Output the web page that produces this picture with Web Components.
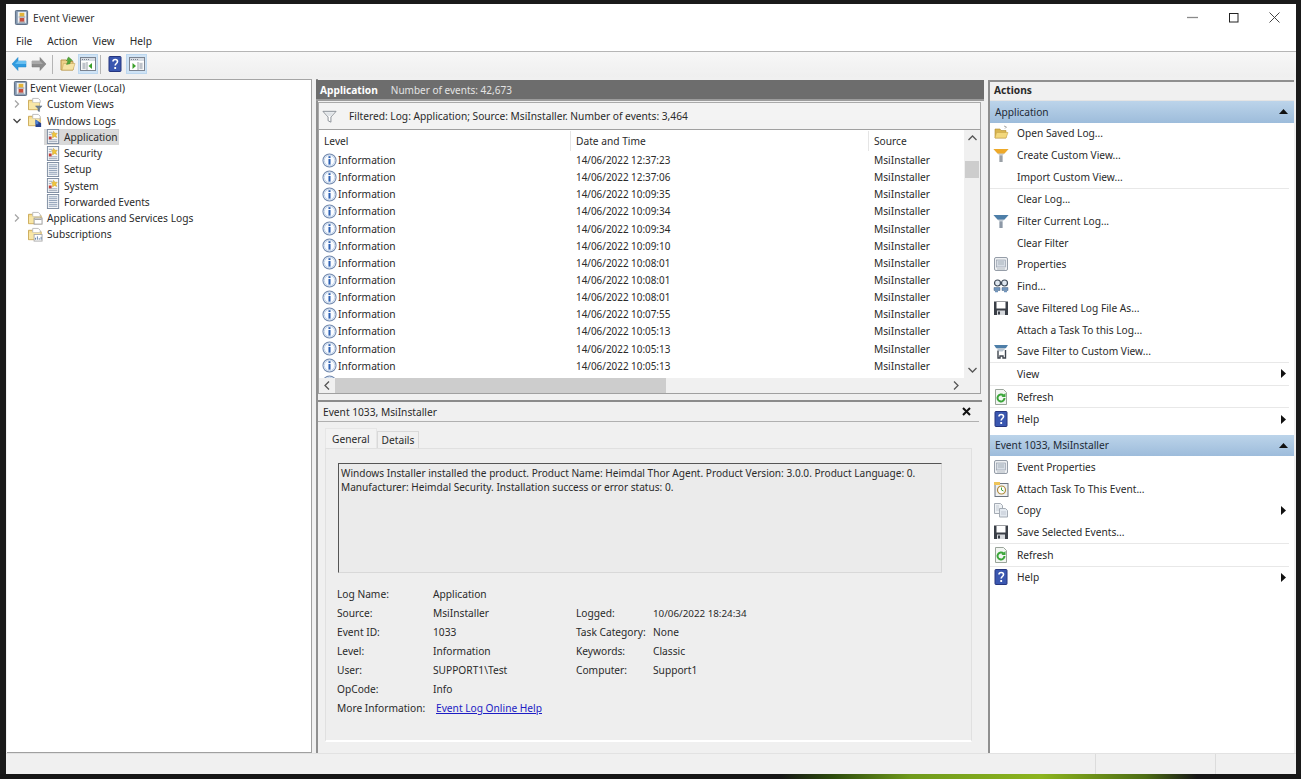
<!DOCTYPE html>
<html><head><meta charset="utf-8"><title>Event Viewer</title>
<style>
html,body{margin:0;height:100%}
body{box-sizing:border-box;height:779px;overflow:hidden;padding:4px 5px 5px 6px;
background:linear-gradient(#1a1a1a,#1a1a1a) top/100% 774px no-repeat,linear-gradient(90deg,#161616 0,#161616 60%,#2c4a0c 64%,#6f9a1c 70%,#8cb41e 80%,#4d6d14 88%,#161616 92%);
font:10.2px "Noto Sans","Open Sans",sans-serif;color:#2a2a2a}
</style></head><body>
<ev-window></ev-window>
<script>
const ICONS={
app:`<rect x="1.500" y=".5" width="13" height="15" rx="1" fill="#8397b0" stroke="#56677e"/><rect x="4" y="2" width="9" height="12" fill="#eef1f4"/><rect x="6" y="3" width="5" height="4" fill="#e3b53a"/><rect x="6" y="8.500" width="5" height="4" fill="#c9503f"/><path d="M5 7.500h7M5 13h7" stroke="#8a8f98"/>`,
folderFilter:`<path d="M.5 3.500V13.500H12V5H6L5 3.500z" fill="#f6dd8e" stroke="#c9a654"/><path d="M5 1.500h6l2 2V6H5z" fill="#fff" stroke="#bbb"/><path d="M1 6h11v7H1z" fill="#f8e6a6"/><path d="M8 9.500h7l-2.700 3v3l-1.600-.5v-2.500z" fill="#6e8093" stroke="#56677e" stroke-width=".5"/>`,
folderLogs:`<path d="M.5 3.500V13.500H13V5H6L5 3.500z" fill="#f6dd8e" stroke="#c9a654"/><path d="M5 1.500h6l2 2V6H5z" fill="#fff" stroke="#bbb"/><path d="M1 6h11v7H1z" fill="#f8e6a6"/><path d="M8 7l6 4v4H8z" fill="#26428f"/><path d="M8 7l3 2v3H8z" fill="#4d7fd0"/>`,
folderApps:`<path d="M.5 3.500V13.500H14V5H6L5 3.500z" fill="#f6dd8e" stroke="#c9a654"/><path d="M5 1.500h6l2 2V6H5z" fill="#fff" stroke="#bbb"/><path d="M1 6h12v7H1z" fill="#f8e6a6"/><rect x="6.500" y="7.500" width="8.500" height="6.500" fill="#fff" stroke="#9a9a9a"/><path d="M7 9h7.500" stroke="#9a9a9a"/>`,
folderSubs:`<path d="M.5 3.500V13.500H14V5H6L5 3.500z" fill="#f6dd8e" stroke="#c9a654"/><path d="M5 1.500h6l2 2V6H5z" fill="#fff" stroke="#bbb"/><path d="M1 6h12v7H1z" fill="#f8e6a6"/><rect x="6.500" y="8" width="8.500" height="7" fill="#fff" stroke="#aaa"/><path d="M8 13.500v-2M10 13.500v-3.500M12 13.500v-1.500M14 13.500v-3" stroke="#5f7fa8"/>`,
log:`<rect x="1.500" y=".5" width="12" height="15" fill="#f4f6f8" stroke="#7c8ba0"/><path d="M3 3.500h4M3 6h3M3 11.500h9M3 13.500h9" stroke="#9aa5b4"/><path d="M8 2.500l1.500 2h2.500l-1.500 2 1 2.500-2.500-1-2 1.500V6L6 4.500h2z" fill="#f0c63c" stroke="#c99c25" stroke-width=".5"/><rect x="3" y="8" width="3" height="3" fill="#c23c36"/>`,
logPlain:`<rect x="1.500" y=".5" width="12" height="15" fill="#f4f6f8" stroke="#7c8ba0"/><path d="M3 3h9M3 5h9M3 7h9M3 9h9M3 11h9M3 13h9" stroke="#8a9cb3"/>`,
back:`<path d="M1 8l6-6.500V5h8v6H7v3.500z" fill="#2f9be0" stroke="#2384c6" stroke-width=".5"/><path d="M7 5h8v3H4z" fill="#68bff0"/>`,
forward:`<path d="M15 8L9 1.500V5H1v6h8v3.500z" fill="#8c8c8c" stroke="#777" stroke-width=".5"/><path d="M9 5H1v3h11z" fill="#a8a8a8"/>`,
openFolder:`<path d="M1 4h5l1.500 1.500H13V14H1z" fill="#ecd089" stroke="#b9964c"/><path d="M2 14l1.500-6.500H15L13 14z" fill="#f6e3a4" stroke="#c8a85c" stroke-width=".6"/><path d="M8.500 1l4 3.500-2 .2-.5 3-3.500.7 1.700-3.700-1.700-.2z" fill="#55a93b" stroke="#3c8427" stroke-width=".5"/>`,
paneL:`<rect x=".5" y="1.500" width="15" height="13" fill="#fff" stroke="#7b8390"/><path d="M1 2h14v3H1z" fill="#d7dce3"/><path d="M2 3.500h1M4 3.500h1M6 3.500h1M8 3.500h1" stroke="#7b8390"/><path d="M1.500 6h5v8h-5z" fill="#f2f2f2"/><path d="M7 6v8" stroke="#9a9fa8"/><path d="M2.500 8h3M2.500 10h3M2.500 12h3" stroke="#8a94a3"/><path d="M12 7v6l-3.500-3z" fill="#3aa02a"/>`,
paneR:`<rect x=".5" y="1.500" width="15" height="13" fill="#fff" stroke="#7b8390"/><path d="M1 2h14v3H1z" fill="#d7dce3"/><path d="M2 3.500h1M4 3.500h1M6 3.500h1M8 3.500h1" stroke="#7b8390"/><path d="M9.500 6h5v8h-5z" fill="#f2f2f2"/><path d="M9 6v8" stroke="#9a9fa8"/><path d="M10.500 8h3M10.500 10h3M10.500 12h3" stroke="#8a94a3"/><path d="M3.500 7v6l3.500-3z" fill="#3aa02a"/>`,
help:`<rect x="2" y=".5" width="12" height="15" rx=".8" fill="#3a57b0" stroke="#26367f"/><path d="M6 5.500c0-2.600 4.500-2.600 4.500 0 0 2-2.300 2-2.300 4" fill="none" stroke="#fff" stroke-width="1.600"/><rect x="7.300" y="11" width="1.800" height="2" fill="#fff"/>`,
info:`<circle cx="8" cy="8" r="7" fill="#eaf2fb" stroke="#6f86ac" stroke-width="1.100"/><circle cx="8" cy="8" r="5.500" fill="#fafcff" stroke="#c3d4ea"/><rect x="6.900" y="3.400" width="2.200" height="2" fill="#2f62b4"/><rect x="6.900" y="6.400" width="2.200" height="6" fill="#2f62b4"/>`,
funnel:`<path d="M1 2.500h14L9.500 8.500V14l-3-1.500v-4z" fill="#fff" stroke="#858b92"/><path d="M3 3.500h10L9 7.500H7z" fill="#dfe3e7"/>`,
openLog:`<path d="M2 4h5l1 1.500h5V13H2z" fill="#d9b64f" stroke="#b0892f" stroke-width=".6"/><path d="M2 13l1.500-5.500H15L13 13z" fill="#f3d87c" stroke="#c9a64a" stroke-width=".6"/><path d="M11 1l2.500 1L12 3.500" fill="none" stroke="#a9a9a9"/>`,
funnelGold:`<path d="M.5 2h15L9.500 8.500V15h-3V8.500z" fill="#c9ccd0"/><path d="M.5 2h15l-4 4.500h-7z" fill="#eea929"/><path d="M6.500 8.500h3V15h-3z" fill="#9aa0a6"/>`,
funnelBlue:`<path d="M.5 2h15L9.500 8.500V15h-3V8.500z" fill="#c3cbd4"/><path d="M.5 2h15l-4 4.500h-7z" fill="#4d7ea8"/><path d="M6.500 8.500h3V15h-3z" fill="#8d98a6"/>`,
props:`<rect x="1.500" y="1.500" width="13" height="13" rx="1.500" fill="#eef0f3" stroke="#959da8"/><rect x="3.500" y="4" width="9" height="7" fill="#d7dde5" stroke="#8d97a4" stroke-width=".6"/><path d="M5 6h6M5 8h6M4 13h8" stroke="#9aa3ae" stroke-width=".7"/>`,
find:`<circle cx="4.500" cy="5" r="3" fill="#dfe7f0" stroke="#3f4a58" stroke-width="1.200"/><circle cx="11.500" cy="5" r="3" fill="#dfe7f0" stroke="#3f4a58" stroke-width="1.200"/><path d="M7 4h2v2.500H7z" fill="#3f4a58"/><path d="M1 9.500h6v3H1zM9 9.500h6v3H9z" fill="#6f94bd" stroke="#4d6784" stroke-width=".5"/><path d="M2 13.500h3M11 13.500h3" stroke="#6f94bd" stroke-width="1.400"/>`,
save:`<path d="M1 1.500h14V15H1z" fill="#3a3f47"/><rect x="3.500" y="2" width="9" height="6.500" fill="#fff"/><rect x="4" y="10.500" width="8" height="4.500" fill="#d5d8dc"/><rect x="5" y="11.500" width="2" height="3" fill="#3a3f47"/>`,
saveFilter:`<path d="M1 2h14l-2 3H3z" fill="#4d7ea8"/><path d="M3 5h10L9.500 8.500H6.500z" fill="#b9c6d2"/><path d="M5 7.500V15h2v-2h3v2h2.500V7" fill="none" stroke="#3f464f" stroke-width="1.400"/>`,
refresh:`<path d="M2.500.5h8l3 3v12h-11z" fill="#f3f6f3" stroke="#9aa59a"/><path d="M11.500 9a3.500 3.500 0 1 1-1-2.500" fill="none" stroke="#3ba63a" stroke-width="2"/><path d="M12.500 4v4h-4z" fill="#3ba63a"/>`,
task:`<rect x="2" y="2.500" width="13" height="13" fill="#eef0f2" stroke="#6f7680"/><path d="M1 1h6v3H1z" fill="#eec45a"/><circle cx="8.500" cy="9" r="4" fill="#fff" stroke="#b08a3c" stroke-width="1.200"/><path d="M8.500 6.500V9l2 1" fill="none" stroke="#3ba63a" stroke-width="1"/>`,
copy:`<path d="M1.500 1.500h6l2 2v8h-8z" fill="#eef1f4" stroke="#a4abb4"/><path d="M6.500 6.500h6l2 2v6.500h-8z" fill="#e3e9f0" stroke="#a4abb4"/><path d="M3 4h3M3 6h3M3 8h3M8 10h5M8 12h5" stroke="#b1bac5" stroke-width=".7"/>`
};
function icon(n,s=16){return `<svg width="${s}" height="${s}" viewBox="0 0 16 16" style="display:block;flex:none">${ICONS[n]||''}</svg>`}
class Base extends HTMLElement{
  constructor(){super();this.attachShadow({mode:'open'})}
}
class EvTreeItem extends Base{
  connectedCallback(){
    const lvl=+this.getAttribute('level')||0,exp=this.getAttribute('expander'),sel=this.hasAttribute('selected');
    const pad=[4,5,37][lvl];
    const chev=exp==='open'?`<path d="M1.500 3l3.500 3.500L8.500 3" fill="none" stroke="#444" stroke-width="1.300"/>`:exp==='closed'?`<path d="M3 1.500L6.500 5 3 8.500" fill="none" stroke="#a6a6a6" stroke-width="1.300"/>`:'';
    this.shadowRoot.innerHTML=`<style>
    :host{display:block}
    .r{display:flex;align-items:center;height:16.250px;padding-left:${pad}px;white-space:nowrap}
    .c{width:10px;height:10px;flex:none;margin-right:${lvl===1?4:0}px;display:${lvl===1?'block':'none'}}
    .g{display:inline-flex;align-items:center;gap:2px;height:16.250px;padding:0 1px 0 2px;${sel?'background:#d9d9d9;':''}}
    .g .l{margin-left:${[0,2,1][lvl]}px}
    </style><div class="r"><svg class="c" viewBox="0 0 10 10">${chev}</svg><span class="g">${icon(this.getAttribute('icon'),15)}<span class="l"><slot></slot></span></span></div>`;
  }
}
class EvTree extends Base{
  connectedCallback(){this.shadowRoot.innerHTML=`<style>:host{display:block;background:#fff;border-top:1px solid #a5a5a5;border-right:1px solid #a0a0a0;border-bottom:1px solid #a0a0a0;margin:0 1px 0 1px;overflow:hidden}</style>
    <ev-tree-item icon="app">Event Viewer (Local)</ev-tree-item>
    <ev-tree-item level="1" expander="closed" icon="folderFilter">Custom Views</ev-tree-item>
    <ev-tree-item level="1" expander="open" icon="folderLogs">Windows Logs</ev-tree-item>
    <ev-tree-item level="2" icon="log" selected>Application</ev-tree-item>
    <ev-tree-item level="2" icon="log">Security</ev-tree-item>
    <ev-tree-item level="2" icon="logPlain">Setup</ev-tree-item>
    <ev-tree-item level="2" icon="log">System</ev-tree-item>
    <ev-tree-item level="2" icon="logPlain">Forwarded Events</ev-tree-item>
    <ev-tree-item level="1" expander="closed" icon="folderApps">Applications and Services Logs</ev-tree-item>
    <ev-tree-item level="1" icon="folderSubs">Subscriptions</ev-tree-item>`}
}
class EvTitlebar extends Base{
  connectedCallback(){this.shadowRoot.innerHTML=`<style>
    :host{display:flex;align-items:center;height:27px;background:#fff;padding-left:8px;flex:none}
    .t{margin-left:4px;color:#333;flex:1}
    .b{width:41px;height:27px;display:flex;align-items:center;justify-content:center}
    svg{display:block}
    </style>${icon('app',15)}<span class="t">Event Viewer</span>
    <span class="b"><svg width="11" height="11" viewBox="0 0 11 11"><path d="M0 5.500h11" stroke="#8a8a8a" stroke-width="1.300"/></svg></span>
    <span class="b"><svg width="10" height="10" viewBox="0 0 10 10"><rect x=".5" y=".5" width="8.500" height="8.500" fill="none" stroke="#222"/></svg></span>
    <span class="b" style="margin-right:1px"><svg width="11" height="11" viewBox="0 0 11 11"><path d="M.5.5l10 10M10.500.5l-10 10" stroke="#444" stroke-width="1"/></svg></span>`}
}
class EvMenubar extends Base{
  connectedCallback(){this.shadowRoot.innerHTML=`<style>
    :host{display:flex;height:20px;align-items:center;background:#fff;border-bottom:1px solid #b5b5b5;flex:none;padding-left:10px;box-sizing:content-box}
    span{margin-right:15px}
    </style><span>File</span><span>Action</span><span>View</span><span>Help</span>`}
}
class EvToolbar extends Base{
  connectedCallback(){this.shadowRoot.innerHTML=`<style>
    :host{display:flex;align-items:center;height:25px;padding:0 0 1px 3px;background:linear-gradient(#f7f7f7,#efefef);flex:none;box-sizing:border-box;margin-bottom:2px}
    .i{width:20px;height:20px;display:flex;align-items:center;justify-content:center}
    .on{background:#cfe3f5;outline:1px solid #bcd7ef;outline-offset:-1px}
    .s{width:1px;height:19px;background:#b4b4b4}
    </style>
    <span class="i">${icon('back')}</span><span class="i">${icon('forward')}</span><span class="s" style="margin:0 5px 0 3px"></span>
    <span class="i">${icon('openFolder')}</span><span class="i on">${icon('paneL')}</span><span class="s" style="margin:0 4px 0 2px"></span>
    <span class="i" style="margin-right:1px">${icon('help')}</span><span class="i on" style="width:21px">${icon('paneR')}</span>`}
}
class EvEventTable extends Base{
  connectedCallback(){
    const times=['12:37:23','12:37:06','10:09:35','10:09:34','10:09:34','10:09:10','10:08:01','10:08:01','10:08:01','10:07:55','10:05:13','10:05:13','10:05:13',''];
    const rows=times.map(t=>`<div class="row">${t?`<span class="lv">${icon('info',15)}<span>Information</span></span><span class="d">14/06/2022 ${t}</span><span>MsiInstaller</span>`:`<span class="lv">${icon('info',15)}</span>`}</div>`).join('');
    this.shadowRoot.innerHTML=`<style>
    :host{display:grid;grid-template-columns:1fr 16px;grid-template-rows:1fr 15px;border:1px solid #a0a0a0;background:#fff;min-height:0;flex:1;margin:0 3px 0 0}
    .main{display:flex;flex-direction:column;min-height:0;overflow:hidden}
    .h{height:21.500px;flex:none;display:grid;grid-template-columns:252px 298px 1fr;align-items:stretch}
    .h span{display:flex;align-items:center;padding-left:5px;border-right:1px solid #e5e5e5;margin:1px 0}
    .h span:last-child{border:0}
    .body{flex:1;overflow:hidden;min-height:0}
    .row{height:17.150px;display:grid;grid-template-columns:252px 298px 1fr;align-items:center;white-space:nowrap}
    .row>span{padding-left:5px}
    .row>.d{font-size:9.900px}
    .row>.lv{display:flex;align-items:center;padding-left:3px;gap:1px}
    .v{background:#f0f0f0;display:flex;flex-direction:column;align-items:center}
    .ar{height:16px;width:16px;display:flex;align-items:center;justify-content:center;flex:none}
    .thumb{width:14px;height:17px;background:#cdcdcd;margin-top:15px}
    .sp{flex:1}
    .hs{background:#f0f0f0;display:flex;align-items:center;grid-column:1/3}
    .hthumb{height:15px;background:#cdcdcd;width:331px;flex:none}
    </style>
    <div class="main"><div class="h"><span>Level</span><span>Date and Time</span><span>Source</span></div><div class="body">${rows}</div></div>
    <div class="v"><span class="ar"><svg width="9" height="6" viewBox="0 0 9 6"><path d="M.5 5l4-4 4 4" fill="none" stroke="#555" stroke-width="1.300"/></svg></span><span class="thumb"></span><span class="sp"></span><span class="ar"><svg width="9" height="6" viewBox="0 0 9 6"><path d="M.5 1l4 4 4-4" fill="none" stroke="#555" stroke-width="1.300"/></svg></span></div>
    <div class="hs"><span class="ar"><svg width="6" height="9" viewBox="0 0 6 9"><path d="M5 .5l-4 4 4 4" fill="none" stroke="#555" stroke-width="1.300"/></svg></span><span class="hthumb"></span><span class="sp"></span><span class="ar" style="margin-right:16px"><svg width="6" height="9" viewBox="0 0 6 9"><path d="M1 .5l4 4-4 4" fill="none" stroke="#555" stroke-width="1.300"/></svg></span></div>`}
}
class EvLogPanel extends Base{
  connectedCallback(){this.shadowRoot.innerHTML=`<style>
    :host{display:flex;flex-direction:column;height:293px;flex:none;box-sizing:border-box;padding-top:1px;margin-right:1px}
    .f{height:27px;box-sizing:border-box;display:flex;align-items:center;flex:none;border:1px solid #a9a9a9;border-bottom:0;margin:0 3px 0 0;padding-left:3px;background:#f3f3f3}
    .f span{margin-left:12px}
    </style><div class="f">${icon('funnel',15)}<span>Filtered: Log: Application; Source: MsiInstaller. Number of events: 3,464</span></div><ev-event-table></ev-event-table>`}
}
class EvField extends Base{
  connectedCallback(){this.shadowRoot.innerHTML=`<style>:host{display:flex;align-items:center;height:19px;white-space:nowrap}</style><slot></slot>`}
}
class EvDetail extends Base{
  connectedCallback(){this.shadowRoot.innerHTML=`<style>
    :host{display:flex;flex-direction:column;flex:1;min-height:0;margin-top:6px;border-top:2px solid #8b8b8b;margin-right:3px}
    .h{height:20px;box-sizing:border-box;flex:none;display:flex;align-items:center;justify-content:space-between;padding:0 8px 0 5px;border-bottom:1px solid #b0b0b0;margin-right:3px}
    .tabs{display:flex;align-items:flex-end;margin:6px 0 0 7px;height:20px;flex:none}
    .tab{padding:0 4px;height:17px;box-sizing:border-box;display:flex;align-items:center;background:#f0f0f0;border:1px solid #d9d9d9;border-bottom:0}
    .tab.a{height:20px;background:#f2f2f2;border-color:#e6e6e6;padding:0 6px}
    .p{margin:0 10px 0 7px;height:294px;box-sizing:border-box;background:#eeeeee;border:1px solid #e0e0e0;border-bottom:2px solid #fff;padding:14px 0 0 12px;flex:none}
    .box{width:604px;height:110px;box-sizing:border-box;border:1px solid #d8d8d8;border-top:1px solid #555;border-left:1px solid #555;background:#ebebeb;padding:2px 0 0 2px;line-height:14px;margin-bottom:11.500px;font-size:10.100px}
    .g{display:grid;grid-template-columns:96px 143px 77px 1fr;margin-left:-1px}
    .d{font-size:9.800px}
    a{color:#1c1cc4;text-decoration:underline;margin-left:3px}
    </style>
    <div class="h"><span>Event 1033, MsiInstaller</span><svg width="9" height="9" viewBox="0 0 9 9"><path d="M1 1l7 7M8 1L1 8" stroke="#111" stroke-width="2"/></svg></div>
    <div class="tabs"><span class="tab a">General</span><span class="tab">Details</span></div>
    <div class="p"><div class="box">Windows Installer installed the product. Product Name: Heimdal Thor Agent. Product Version: 3.0.0. Product Language: 0.<br>Manufacturer: Heimdal Security. Installation success or error status: 0.</div>
    <div class="g">
    <ev-field>Log Name:</ev-field><ev-field>Application</ev-field><ev-field></ev-field><ev-field></ev-field>
    <ev-field>Source:</ev-field><ev-field>MsiInstaller</ev-field><ev-field>Logged:</ev-field><ev-field class="d">10/06/2022 18:24:34</ev-field>
    <ev-field>Event ID:</ev-field><ev-field>1033</ev-field><ev-field>Task Category:</ev-field><ev-field>None</ev-field>
    <ev-field>Level:</ev-field><ev-field>Information</ev-field><ev-field>Keywords:</ev-field><ev-field>Classic</ev-field>
    <ev-field>User:</ev-field><ev-field>SUPPORT1\\Test</ev-field><ev-field>Computer:</ev-field><ev-field>Support1</ev-field>
    <ev-field>OpCode:</ev-field><ev-field>Info</ev-field><ev-field></ev-field><ev-field></ev-field>
    <ev-field>More Information:</ev-field><ev-field><a href="#">Event Log Online Help</a></ev-field><ev-field></ev-field><ev-field></ev-field>
    </div></div>`}
}
class EvCenter extends Base{
  connectedCallback(){this.shadowRoot.innerHTML=`<style>
    :host{display:flex;flex-direction:column;min-height:0;background:#f0f0f0;border-left:2px solid #8f8f8f}
    .b{height:19px;flex:none;background:#6d6d6d;color:#e4e4e4;display:flex;align-items:center;border-bottom:2px solid #9c9c9c;margin:1px 1px 0 -2px;white-space:pre;padding-left:4px}
    b{color:#fff;font-weight:700;margin-right:13px}
    span{font-size:10px}
    </style><div class="b"><b>Application</b><span>Number of events: 42,673</span></div><ev-log-panel></ev-log-panel><ev-detail></ev-detail>`}
}
class EvAction extends Base{
  connectedCallback(){
    const ic=this.getAttribute('icon'),sep=this.hasAttribute('sep'),sub=this.hasAttribute('sub');
    this.shadowRoot.innerHTML=`<style>
    :host{display:flex;align-items:center;height:21.700px;white-space:nowrap;padding:0 3px 0 3px;margin-right:5px;${sep?'border-bottom:1px solid #e8e8e8;':''}}
    .i{width:16px;height:16px;flex:none;margin-right:8px}
    .t{flex:1}
    </style><span class="i">${ic?icon(ic):''}</span><span class="t"><slot></slot></span>${sub?`<svg width="5" height="9" viewBox="0 0 5 9"><path d="M0 0l5 4.500-5 4.500z" fill="#111"/></svg>`:''}`}
}
class EvSection extends Base{
  connectedCallback(){this.shadowRoot.innerHTML=`<style>
    :host{display:block}
    .h{height:21.500px;display:flex;align-items:center;justify-content:space-between;padding:0 6px 0 5px;background:linear-gradient(#bcd4ea,#9dbcdb);color:#1f2a36}
    </style><div class="h"><span>${this.getAttribute('title')}</span><svg width="9" height="5" viewBox="0 0 9 5"><path d="M0 5l4.500-5L9 5z" fill="#111"/></svg></div><slot></slot>`}
}
class EvActions extends Base{
  connectedCallback(){this.shadowRoot.innerHTML=`<style>
    :host{display:block;background:#fff;border-left:2px solid #8f8f8f;border-top:2px solid #8f8f8f;margin-top:1px;overflow:hidden}
    .t{height:19px;box-sizing:border-box;display:flex;align-items:center;padding:0 0 2px 4px;font-weight:700;background:#f0f0f0;border-bottom:1px solid #e4e4e4}
    .gap{height:4.500px}
    </style><div class="t">Actions</div>
    <ev-section title="Application">
    <ev-action icon="openLog">Open Saved Log...</ev-action>
    <ev-action icon="funnelGold">Create Custom View...</ev-action>
    <ev-action sep>Import Custom View...</ev-action>
    <ev-action>Clear Log...</ev-action>
    <ev-action icon="funnelBlue">Filter Current Log...</ev-action>
    <ev-action>Clear Filter</ev-action>
    <ev-action icon="props">Properties</ev-action>
    <ev-action icon="find">Find...</ev-action>
    <ev-action icon="save">Save Filtered Log File As...</ev-action>
    <ev-action>Attach a Task To this Log...</ev-action>
    <ev-action icon="saveFilter" sep>Save Filter to Custom View...</ev-action>
    <ev-action sub sep>View</ev-action>
    <ev-action icon="refresh" sep>Refresh</ev-action>
    <ev-action icon="help" sub>Help</ev-action>
    </ev-section><div class="gap"></div>
    <ev-section title="Event 1033, MsiInstaller">
    <ev-action icon="props">Event Properties</ev-action>
    <ev-action icon="task">Attach Task To This Event...</ev-action>
    <ev-action icon="copy" sub>Copy</ev-action>
    <ev-action icon="save" sep>Save Selected Events...</ev-action>
    <ev-action icon="refresh" sep>Refresh</ev-action>
    <ev-action icon="help" sub>Help</ev-action>
    </ev-section>`}
}
class EvStatusbar extends Base{
  connectedCallback(){this.shadowRoot.innerHTML=`<style>
    :host{display:grid;grid-template-columns:1090px 120px 1fr;height:21px;flex:none;background:#f0f0f0;border-top:1px solid #e2e2e2;box-sizing:border-box}
    span{border-right:1px solid #dcdcdc}span:last-child{border:0}
    </style><span></span><span></span><span></span>`}
}
class EvWindow extends Base{
  connectedCallback(){this.shadowRoot.innerHTML=`<style>
    :host{display:flex;flex-direction:column;height:770px;background:#f0f0f0;box-sizing:border-box;overflow:hidden}
    .m{flex:1;min-height:0;display:grid;grid-template-columns:307px 669px 1fr;column-gap:3px;padding-right:2px;box-sizing:border-box}
    </style><ev-titlebar></ev-titlebar><ev-menubar></ev-menubar><ev-toolbar></ev-toolbar>
    <div class="m"><ev-tree></ev-tree><ev-center></ev-center><ev-actions></ev-actions></div><ev-statusbar></ev-statusbar>`}
}
for(const [n,c] of Object.entries({'ev-tree-item':EvTreeItem,'ev-tree':EvTree,'ev-titlebar':EvTitlebar,'ev-menubar':EvMenubar,'ev-toolbar':EvToolbar,'ev-event-table':EvEventTable,'ev-log-panel':EvLogPanel,'ev-field':EvField,'ev-detail':EvDetail,'ev-center':EvCenter,'ev-action':EvAction,'ev-section':EvSection,'ev-actions':EvActions,'ev-statusbar':EvStatusbar,'ev-window':EvWindow}))customElements.define(n,c);
</script></body></html>
